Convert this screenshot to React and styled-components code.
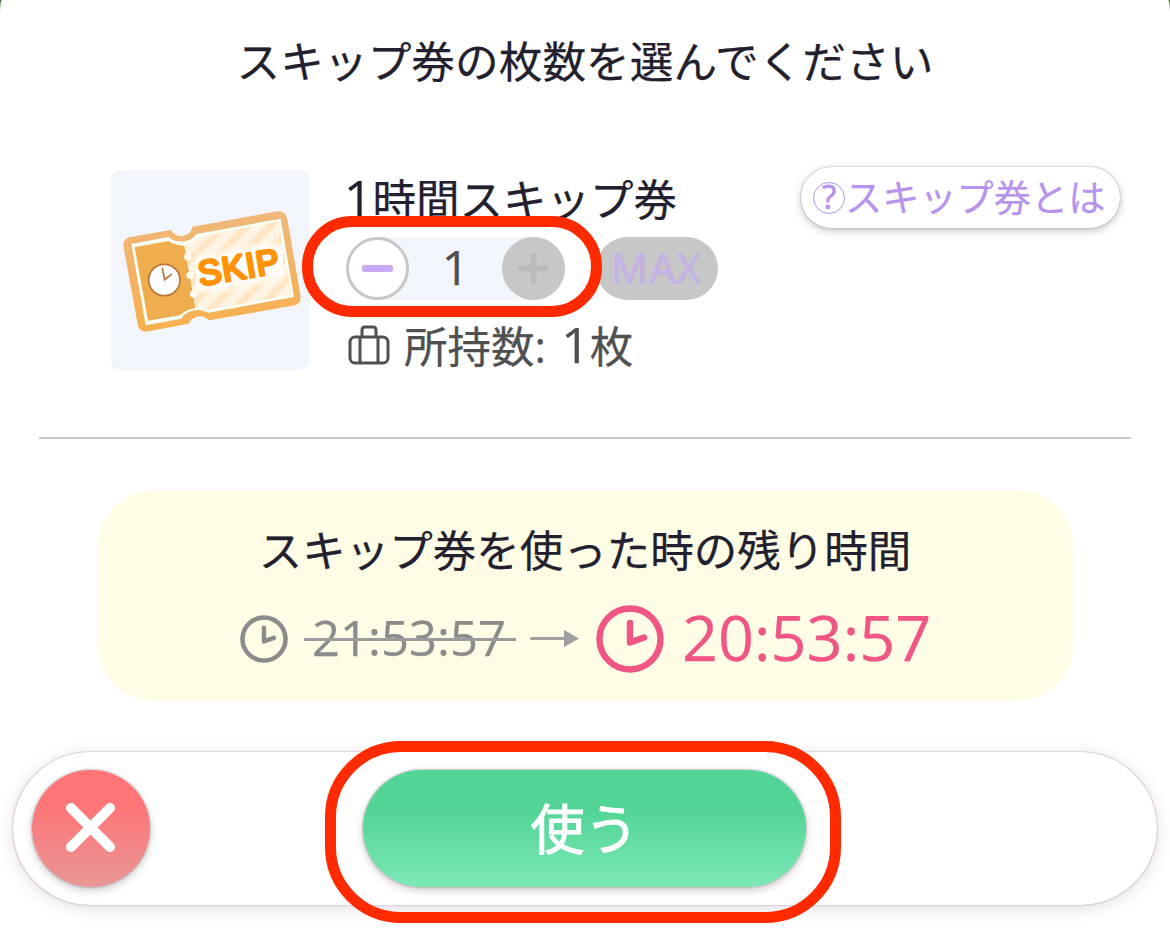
import React from 'react'
import styled, { createGlobalStyle } from 'styled-components'

const GlobalStyle = createGlobalStyle`
  * {
    box-sizing: border-box;
  }
  body {
    margin: 0;
    background: #557a45;
    overflow: hidden;
  }
  button {
    border: none;
    padding: 0;
    font: inherit;
    color: inherit;
  }
`

const Dialog = styled.main`
  width: 1170px;
  height: 950px;
  display: flex;
  flex-direction: column;
  background: #fff;
  border-radius: 2px 2px 0 0 / 14px 14px 0 0;
  color: #231f2e;
  font-family: 'Open Sans', 'Noto Sans CJK JP', sans-serif;
  font-size: 43.5px;
  line-height: 60px;
  white-space: nowrap;
  -webkit-text-stroke: 0.25px currentColor;
`

const Title = styled.h1`
  margin: 31px 0 0;
  font-size: 43.7px;
  font-weight: 400;
  text-align: center;
`

const ItemRow = styled.section`
  display: flex;
  align-items: flex-start;
  height: 267px;
  margin: 76px 39px 0;
  padding: 3px 10px 0 72px;
`

const Thumb = styled.div`
  width: 199px;
  height: 200px;
  border-radius: 10px;
  background: #f2f5fb;
  flex: none;
`

const ItemInfo = styled.div`
  flex: 1;
  margin-left: 36px;
`

const ItemName = styled.h2`
  margin: 0 0 0 -2px;
  height: 67px;
  font-size: inherit;
  font-weight: 400;
`

const Digits = styled.span`
  font-size: ${(props) => props.$size}px;
  line-height: 0;
`

const QuantityRow = styled.div`
  display: flex;
`

const Stepper = styled.div`
  position: relative;
  display: flex;
  justify-content: space-between;
  align-items: center;
  width: 219px;
  height: 63px;
  border-radius: 32px;
  background: #f2f5fb;
  color: #505050;
  ${Digits} {
    padding-bottom: 3px;
  }
`

const StepButton = styled.button`
  width: 63px;
  height: 63px;
  border-radius: 50%;
  border: 3px solid #c7c7c7;
  background: ${(props) => (props.disabled ? '#c7c7c7' : '#fff')};
  color: ${(props) => (props.disabled ? '#bababa' : '#c9a9f6')};
  svg {
    display: block;
    margin: auto;
  }
`

const MaxButton = styled.button`
  width: 122px;
  height: 63px;
  margin-left: 31px;
  padding: 0 1px 3px 0;
  border-radius: 32px;
  background: #c7c7c7;
  color: #c4b3e3;
  font-size: 41px;
  letter-spacing: 1.5px;
  -webkit-text-stroke: 1.3px currentColor;
`

const Owned = styled.div`
  display: flex;
  margin-top: 17px;
  color: #505050;
  word-spacing: 4px;
  svg {
    margin: 8px 14px 0 2px;
  }
`

const HelpButton = styled.button`
  display: flex;
  align-items: center;
  width: 319px;
  height: 61px;
  margin: -3px 1px 0 0;
  padding: 1px 0 0 12px;
  border-radius: 31px;
  background: #fff;
  color: #b893ee;
  font-size: 37.2px;
  box-shadow: 0 0 2px rgba(0, 0, 0, 0.35), 0 3px 8px rgba(0, 0, 0, 0.22);
`

const QuestionMark = styled.span`
  width: 32px;
  height: 32px;
  border: 1px solid currentColor;
  border-radius: 50%;
  font-size: 33px;
  line-height: 28px;
  text-align: center;
  -webkit-text-stroke: 0.8px currentColor;
`

const Divider = styled.hr`
  width: 1092px;
  height: 2px;
  margin: 3px auto 0;
  border: none;
  background: #cbcbcb;
`

const TimePanel = styled.section`
  height: 211px;
  margin: 51px 97px 0 98px;
  padding-top: 31px;
  border-radius: 56px;
  background: #fffde6;
  text-align: center;
`

const PanelTitle = styled.h2`
  margin: 0 1px 0 0;
  font-size: inherit;
  font-weight: 400;
`

const Times = styled.div`
  display: flex;
  align-items: center;
  height: 68px;
  margin-top: 24px;
  padding-left: 142px;
`

const OldTime = styled.s`
  position: relative;
  width: 212px;
  margin: -5px 14px 0 16px;
  padding-right: 2px;
  color: #8b8b8b;
  font-size: 49px;
  text-decoration: none;
  &::after {
    content: '';
    position: absolute;
    left: 0;
    right: 0;
    top: 31px;
    height: 3px;
    background: #9b9b9b;
  }
`

const NewTime = styled.strong`
  margin: -5px 0 0 18px;
  color: #f15583;
  font-size: 63px;
  font-weight: 400;
`

const ActionBar = styled.footer`
  display: grid;
  grid-template-columns: 118px 443px;
  column-gap: 213px;
  height: 153px;
  margin: 51px 13px 0;
  padding: 18px 19px;
  border-radius: 77px;
  background: #fff;
  box-shadow: 0 0 1.5px rgba(85, 30, 70, 0.6), 0 3px 16px rgba(70, 20, 60, 0.15);
`

const RoundedButton = styled.button`
  height: 117px;
  border-radius: 59px;
  color: #fff;
  box-shadow: 0 0 2px rgba(0, 0, 0, 0.5), 0 3px 9px rgba(0, 0, 0, 0.22);
`

const CloseButton = styled(RoundedButton)`
  background: linear-gradient(#ff7476 28%, #e99696);
  svg {
    display: block;
    margin: -2px auto 0;
  }
`

const UseButton = styled(RoundedButton)`
  position: relative;
  background: linear-gradient(#52d496 33%, #7ce8b5);
  font-size: 54px;
  -webkit-text-stroke: 1px currentColor;
`

const Highlight = styled.span`
  position: absolute;
  inset: ${(props) => props.$inset};
  border: 11px solid #ff2a00;
  border-radius: ${(props) => props.$radius}px;
  pointer-events: none;
`

const Ticket = () => (
  <svg width="199" height="200" viewBox="33 30 597 600">
    <defs>
      <linearGradient id="edge" x1="0" y1="0" x2="0" y2="1">
        <stop offset="0" stopColor="#efb77b" />
        <stop offset="1" stopColor="#f8b04f" />
      </linearGradient>
      <clipPath id="body">
        <path d="M254 255Q280 250 295 231L535 184L575 404L325 450Q295 436 287 446Z" />
      </clipPath>
      <filter id="glow" x="-20%" y="-150%" width="140%" height="400%">
        <feGaussianBlur stdDeviation="12" />
      </filter>
    </defs>
    <path
      d="M88 232L212 210Q226 230 248 228Q272 224 278 200L532 154Q556 152 562 176L602 410Q602 430 585 436L327 481Q310 464 290 470Q272 476 266 491L138 515Q121 515 114 498L70 258Q68 239 88 232Z"
      fill="url(#edge)"
    />
    <path
      d="M94 252L205 231Q226 248 254 244Q278 240 290 222L542 176L582 411L325 458Q298 444 272 454Q250 462 245 476L137 496Z"
      fill="#f5fff5"
    />
    <path
      d="M104 262L205 243Q225 256 253 257L287 444Q258 448 240 466L144 482Z"
      fill="#efad4e"
    />
    <g clipPath="url(#body)">
      <path d="M250 170H600V470H250Z" fill="#fff3e3" />
      <path
        d="M250 320L390 180M250 390L460 180M250 460L530 180M310 470L590 190M380 470L600 250M450 470L610 310M520 470L620 370"
        stroke="#ffe7c6"
        strokeWidth="22"
      />
      <path
        d="M325 342L510 305"
        fill="none"
        stroke="#fff"
        strokeWidth="106"
        strokeLinecap="round"
        filter="url(#glow)"
      />
    </g>
    <g fill="#fffaf0">
      <circle cx="263" cy="290" r="11" />
      <circle cx="270" cy="346" r="11" />
      <circle cx="281" cy="402" r="11" />
    </g>
    <circle cx="193" cy="360" r="47" fill="#fff" stroke="#b87538" strokeWidth="5" />
    <path
      d="M187 325L194 359L214 343"
      fill="none"
      stroke="#b87538"
      strokeWidth="5"
      strokeLinecap="round"
    />
    <text
      transform="translate(301 377) rotate(-9.5)"
      textLength="245"
      lengthAdjust="spacing"
      fontFamily="Liberation Sans"
      fontWeight="400"
      fontSize="104"
      fill="#ff9305"
      stroke="#ff9305"
      strokeWidth="9"
      strokeLinejoin="round"
    >
      SKIP
    </text>
  </svg>
)

const Bag = () => (
  <svg width="42" height="40" viewBox="0 0 42 40" fill="none" stroke="#505050" strokeWidth="3">
    <rect x="2" y="12" width="38" height="26" rx="5" />
    <path d="M14 12V5Q14 2 17 2H25Q28 2 28 5V12M12 12V38M30 12V38" />
  </svg>
)

const Clock = ({ size, color }) => (
  <svg
    width={size}
    height={size}
    viewBox="0 0 68 68"
    fill="none"
    stroke={color}
    strokeWidth="6.4"
    strokeLinecap="round"
    strokeLinejoin="round"
  >
    <circle cx="34" cy="34" r="30.5" />
    <path d="M34 18V37.5L48 32.5" />
  </svg>
)

const ArrowIcon = styled.svg`
  margin-right: 17px;
`

const Arrow = () => (
  <ArrowIcon width="49" height="18" viewBox="0 0 49 18">
    <path d="M1.5 8.5H36" stroke="#9f9f9f" strokeWidth="3" strokeLinecap="round" />
    <path d="M34 0L49 8.5L34 17Z" fill="#9f9f9f" />
  </ArrowIcon>
)

const App = () => (
  <>
    <GlobalStyle />
    <Dialog>
      <Title>スキップ券の枚数を選んでください</Title>
      <ItemRow>
        <Thumb>
          <Ticket />
        </Thumb>
        <ItemInfo>
          <ItemName>
            <Digits $size={50}>1</Digits>時間スキップ券
          </ItemName>
          <QuantityRow>
            <Stepper>
              <StepButton aria-label="減らす">
                <svg width="31" height="31" stroke="currentColor" strokeWidth="7">
                  <path d="M3 15.5H28" strokeLinecap="round" />
                </svg>
              </StepButton>
              <Digits $size={48}>1</Digits>
              <StepButton aria-label="増やす" disabled>
                <svg width="31" height="31" stroke="currentColor" strokeWidth="6">
                  <path d="M3 15.5H28M15.5 3V28" strokeLinecap="round" />
                </svg>
              </StepButton>
              <Highlight $inset="-21px -37px -17px -44px" $radius={50} />
            </Stepper>
            <MaxButton disabled>MAX</MaxButton>
          </QuantityRow>
          <Owned>
            <Bag />
            <span>
              所持数: <Digits $size={50}>1</Digits>枚
            </span>
          </Owned>
        </ItemInfo>
        <HelpButton>
          <QuestionMark>?</QuestionMark>
          スキップ券とは
        </HelpButton>
      </ItemRow>
      <Divider />
      <TimePanel>
        <PanelTitle>スキップ券を使った時の残り時間</PanelTitle>
        <Times>
          <Clock size={48} color="#8b8b8b" />
          <OldTime>21:53:57</OldTime>
          <Arrow />
          <Clock size={68} color="#f15583" />
          <NewTime>20:53:57</NewTime>
        </Times>
      </TimePanel>
      <ActionBar>
        <CloseButton aria-label="閉じる">
          <svg width="52" height="52" stroke="#fff" strokeWidth="10" strokeLinecap="round">
            <path d="M6 6L45 45M45 6L6 45" />
          </svg>
        </CloseButton>
        <UseButton>
          使う
          <Highlight $inset="-29px -35px -36px -38px" $radius={76} />
        </UseButton>
      </ActionBar>
    </Dialog>
  </>
)

export default App
